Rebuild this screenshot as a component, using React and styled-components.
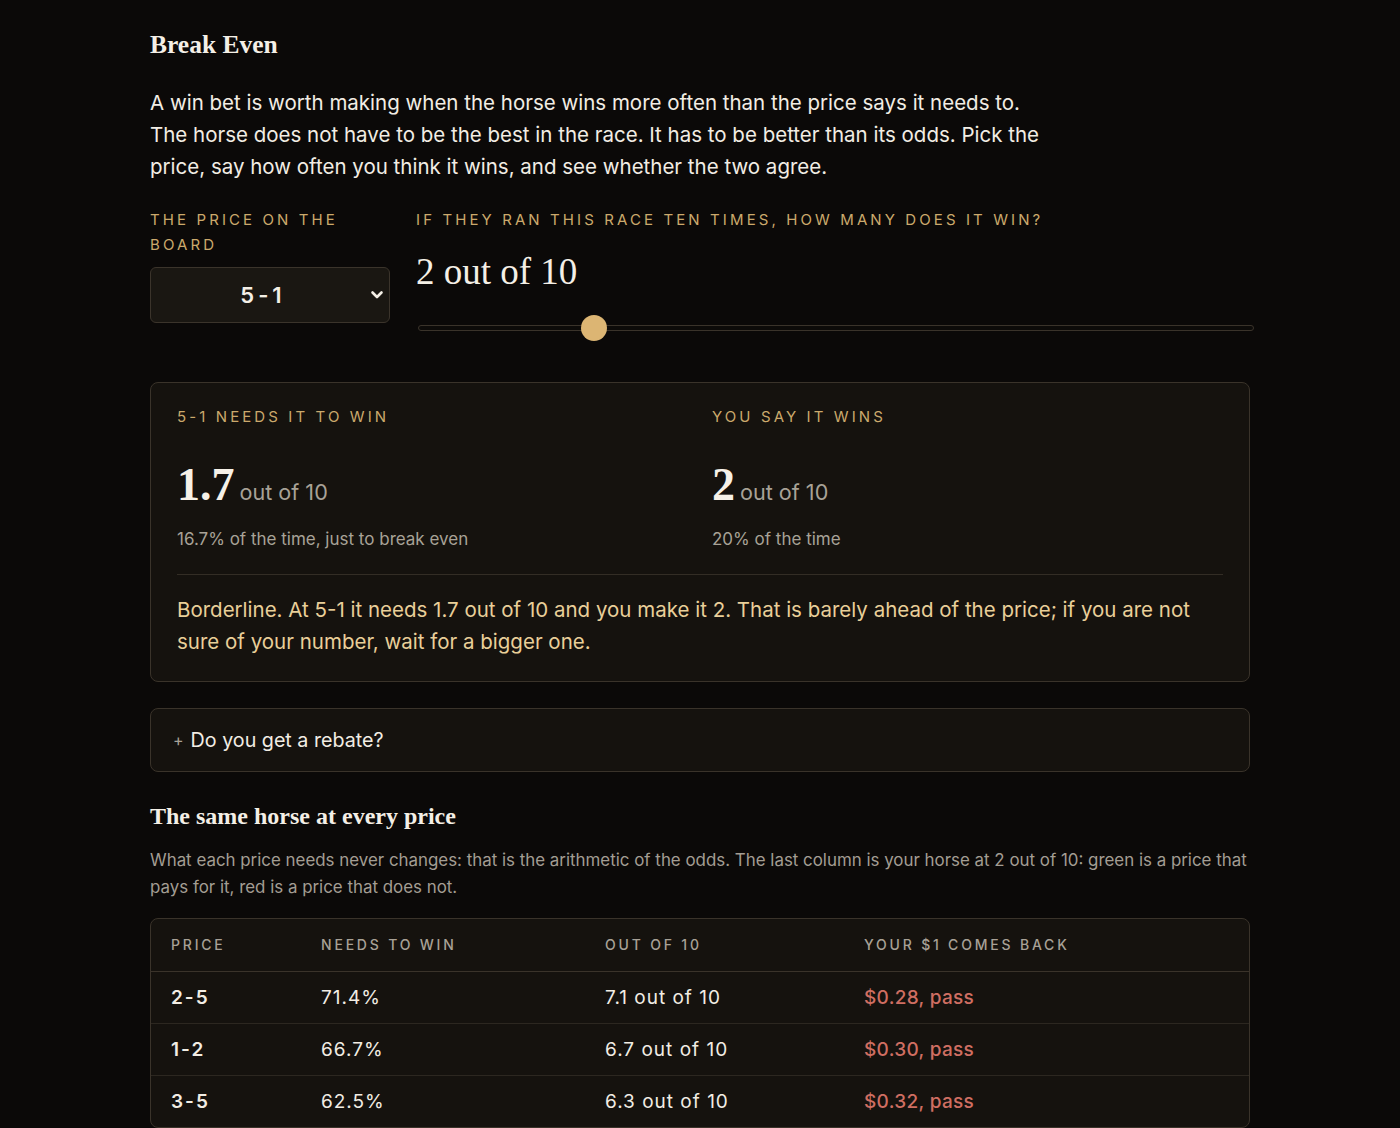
import React, { useState } from 'react'
import styled, { createGlobalStyle } from 'styled-components'

const GlobalStyle = createGlobalStyle`
  html, body {
    margin: 0;
    padding: 0;
    background: #0b0908;
  }
  body {
    font-family: Inter, "Noto Sans", "Liberation Sans", sans-serif;
    color: #f2ede4;
    -webkit-font-smoothing: antialiased;
  }
  * { box-sizing: border-box; }
`

const Page = styled.main`
  width: 1100px;
  margin: 0 auto;
  padding: 28px 0 40px;
`

const Title = styled.h1`
  margin: 0;
  font-family: "Liberation Serif", "DejaVu Serif", serif;
  font-weight: 700;
  font-size: 25.5px;
  line-height: 34px;
  color: #f4efe6;
`

const Intro = styled.p`
  margin: 25px 0 0;
  max-width: 895px;
  font-size: 20.5px;
  line-height: 32px;
  color: #f2ede4;
`

const Controls = styled.div`
  display: grid;
  grid-template-columns: 240px 1fr;
  column-gap: 26px;
  margin-top: 24px;
  align-items: start;
`

const Field = styled.div`
  display: flex;
  flex-direction: column;
`

const Label = styled.div`
  font-size: 15px;
  line-height: 25px;
  letter-spacing: 3.1px;
  text-transform: uppercase;
  color: #cba96c;
`

const SelectWrap = styled.div`
  position: relative;
  margin-top: 10px;
`

const Select = styled.select`
  appearance: none;
  width: 240px;
  height: 56px;
  background: #1a1712;
  border: 1px solid #3b342b;
  border-radius: 6px;
  color: #f4efe6;
  font-family: Inter, "Liberation Sans", sans-serif;
  font-size: 22px;
  font-weight: 600;
  letter-spacing: 4px;
  text-align: center;
  text-align-last: center;
  padding: 0 38px 0 24px;
  outline: none;
`

const Chevron = styled.svg`
  position: absolute;
  right: 6px;
  top: 22px;
  pointer-events: none;
`

const BigValue = styled.div`
  margin-top: 18px;
  font-family: "Liberation Serif", "DejaVu Serif", serif;
  font-size: 37px;
  line-height: 44px;
  color: #f4efe6;
`

const Range = styled.input`
  appearance: none;
  -webkit-appearance: none;
  width: 836px;
  height: 26px;
  margin: 21px 0 0 2px;
  background: transparent;

  &::-webkit-slider-runnable-track {
    height: 6px;
    border: 1px solid #3a332a;
    border-radius: 3px;
    background: #0d0b09;
  }
  &::-webkit-slider-thumb {
    -webkit-appearance: none;
    width: 26px;
    height: 26px;
    margin-top: -11px;
    border-radius: 50%;
    background: #dcb573;
    border: none;
  }
`

const Panel = styled.section`
  margin-top: ${p => p.$gap || 0}px;
  background: #15120e;
  border: 1px solid #3a332a;
  border-radius: 8px;
`

const Result = styled(Panel)`
  padding: 24px 26px 23px;
`

const Columns = styled.div`
  display: grid;
  grid-template-columns: 1fr 1fr;
  column-gap: 24px;
`

const Stat = styled.div`
  display: flex;
  flex-direction: column;
`

const StatLabel = styled(Label)`
  line-height: 20px;
`

const NumberRow = styled.div`
  display: flex;
  align-items: baseline;
  gap: 5px;
  margin-top: 35px;
`

const Num = styled.span`
  font-family: "Liberation Serif", "DejaVu Serif", serif;
  font-weight: 700;
  font-size: 46px;
  line-height: 46px;
  color: #f6f1e8;
`

const OutOf = styled.span`
  font-size: 21.6px;
  color: #a8a297;
`

const Sub = styled.div`
  margin-top: 19px;
  font-size: 17px;
  line-height: 24px;
  color: #a8a297;
`

const Divider = styled.hr`
  margin: 23px 0 0;
  border: none;
  border-top: 1px solid #332d25;
`

const Verdict = styled.p`
  margin: 19px 0 0;
  font-size: 20.5px;
  line-height: 32px;
  color: #e9cf99;
`

const Rebate = styled(Panel)`
  height: 64px;
  display: flex;
  align-items: center;
  padding: 0 22px;
  font-size: 19.7px;
  color: #f2ede4;
  cursor: pointer;
`

const Plus = styled.span`
  font-size: 16px;
  color: #a8a297;
  margin-right: 7px;
`

const SectionTitle = styled.h2`
  margin: 30px 0 0;
  font-family: "Liberation Serif", "DejaVu Serif", serif;
  font-weight: 700;
  font-size: 24px;
  line-height: 28px;
  color: #f4efe6;
`

const Note = styled.p`
  margin: 17px 0 0;
  font-size: 16.9px;
  line-height: 27px;
  color: #a39d93;
`

const TableBox = styled(Panel)`
  overflow: hidden;
`

const Table = styled.table`
  width: 100%;
  border-collapse: collapse;
  table-layout: fixed;
`

const Th = styled.th`
  height: 52px;
  padding: 0 0 0 20px;
  text-align: left;
  font-size: 14px;
  font-weight: 500;
  letter-spacing: 2.8px;
  text-transform: uppercase;
  color: #a8a196;
  border-bottom: 1px solid #3a332a;
`

const Td = styled.td`
  height: 52px;
  padding: 0 0 0 20px;
  font-size: 19px;
  color: ${p => (p.$bad ? '#cf6e62' : p.$good ? '#7fb27a' : '#f2ede4')};
  font-weight: ${p => (p.$strong ? 600 : p.$bad || p.$good ? 500 : 400)};
  letter-spacing: ${p => (p.$strong ? '2px' : p.$bad || p.$good ? '0.3px' : '1px')};
  border-top: 1px solid #2c2720;
  tr:first-child > & { border-top: none; }
`

const prices = ['2-5', '1-2', '3-5', '4-5', '1-1', '6-5', '3-2', '2-1', '5-2', '3-1', '4-1', '5-1', '6-1', '8-1', '10-1']

const odds = p => {
  const [a, b] = p.split('-').map(Number)
  return a / b
}

export default function App() {
  const [price, setPrice] = useState('5-1')
  const [wins, setWins] = useState(2)

  const need = 1 / (odds(price) + 1)
  const needOut = (need * 10).toFixed(1)
  const rows = ['2-5', '1-2', '3-5'].map(p => {
    const n = 1 / (odds(p) + 1)
    const back = (wins / 10) * (odds(p) + 1)
    return {
      p,
      pct: (n * 100).toFixed(1) + '%',
      out: (n * 10).toFixed(1) + ' out of 10',
      back: '$' + back.toFixed(2) + (back >= 1 ? ', bet' : ', pass'),
      bad: back < 1,
    }
  })

  const verdict = `Borderline. At ${price} it needs ${needOut} out of 10 and you make it ${wins}. That is barely ahead of the price; if you are not sure of your number, wait for a bigger one.`
  const note = `What each price needs never changes: that is the arithmetic of the odds. The last column is your horse at ${wins} out of 10: green is a price that pays for it, red is a price that does not.`

  return (
    <>
      <GlobalStyle />
      <Page>
        <Title>Break Even</Title>
        <Intro>
          A win bet is worth making when the horse wins more often than the price says it needs to.
          The horse does not have to be the best in the race. It has to be better than its odds. Pick the
          price, say how often you think it wins, and see whether the two agree.
        </Intro>

        <Controls>
          <Field>
            <Label>The price on the board</Label>
            <SelectWrap>
              <Select value={price} onChange={e => setPrice(e.target.value)}>
                {prices.map(p => <option key={p} value={p}>{p}</option>)}
              </Select>
              <Chevron width="14" height="12" viewBox="0 0 14 12">
                <path d="M2.5 3.5 L7 8 L11.5 3.5" fill="none" stroke="#f4efe6" strokeWidth="2.6" strokeLinecap="round" strokeLinejoin="round" />
              </Chevron>
            </SelectWrap>
          </Field>
          <Field>
            <Label>If they ran this race ten times, how many does it win?</Label>
            <BigValue>{`${wins} out of 10`}</BigValue>
            <Range type="range" min="0" max="10" step="1" value={wins} onChange={e => setWins(Number(e.target.value))} />
          </Field>
        </Controls>

        <Result $gap={41}>
          <Columns>
            <Stat>
              <StatLabel>{`${price} needs it to win`}</StatLabel>
              <NumberRow>
                <Num>{needOut}</Num>
                <OutOf>out of 10</OutOf>
              </NumberRow>
              <Sub>{`${(need * 100).toFixed(1)}% of the time, just to break even`}</Sub>
            </Stat>
            <Stat>
              <StatLabel>You say it wins</StatLabel>
              <NumberRow>
                <Num>{wins}</Num>
                <OutOf>out of 10</OutOf>
              </NumberRow>
              <Sub>{`${wins * 10}% of the time`}</Sub>
            </Stat>
          </Columns>
          <Divider />
          <Verdict>{verdict}</Verdict>
        </Result>

        <Rebate $gap={26}>
          <Plus>+</Plus>Do you get a rebate?
        </Rebate>

        <SectionTitle>The same horse at every price</SectionTitle>
        <Note>{note}</Note>

        <TableBox $gap={17}>
          <Table>
            <colgroup>
              <col style={{ width: 150 }} />
              <col style={{ width: 284 }} />
              <col style={{ width: 259 }} />
              <col />
            </colgroup>
            <thead>
              <tr>
                <Th>Price</Th>
                <Th>Needs to win</Th>
                <Th>Out of 10</Th>
                <Th>Your $1 comes back</Th>
              </tr>
            </thead>
            <tbody>
              {rows.map(r => (
                <tr key={r.p}>
                  <Td $strong>{r.p}</Td>
                  <Td>{r.pct}</Td>
                  <Td>{r.out}</Td>
                  <Td $bad={r.bad} $good={!r.bad}>{r.back}</Td>
                </tr>
              ))}
            </tbody>
          </Table>
        </TableBox>
      </Page>
    </>
  )
}
